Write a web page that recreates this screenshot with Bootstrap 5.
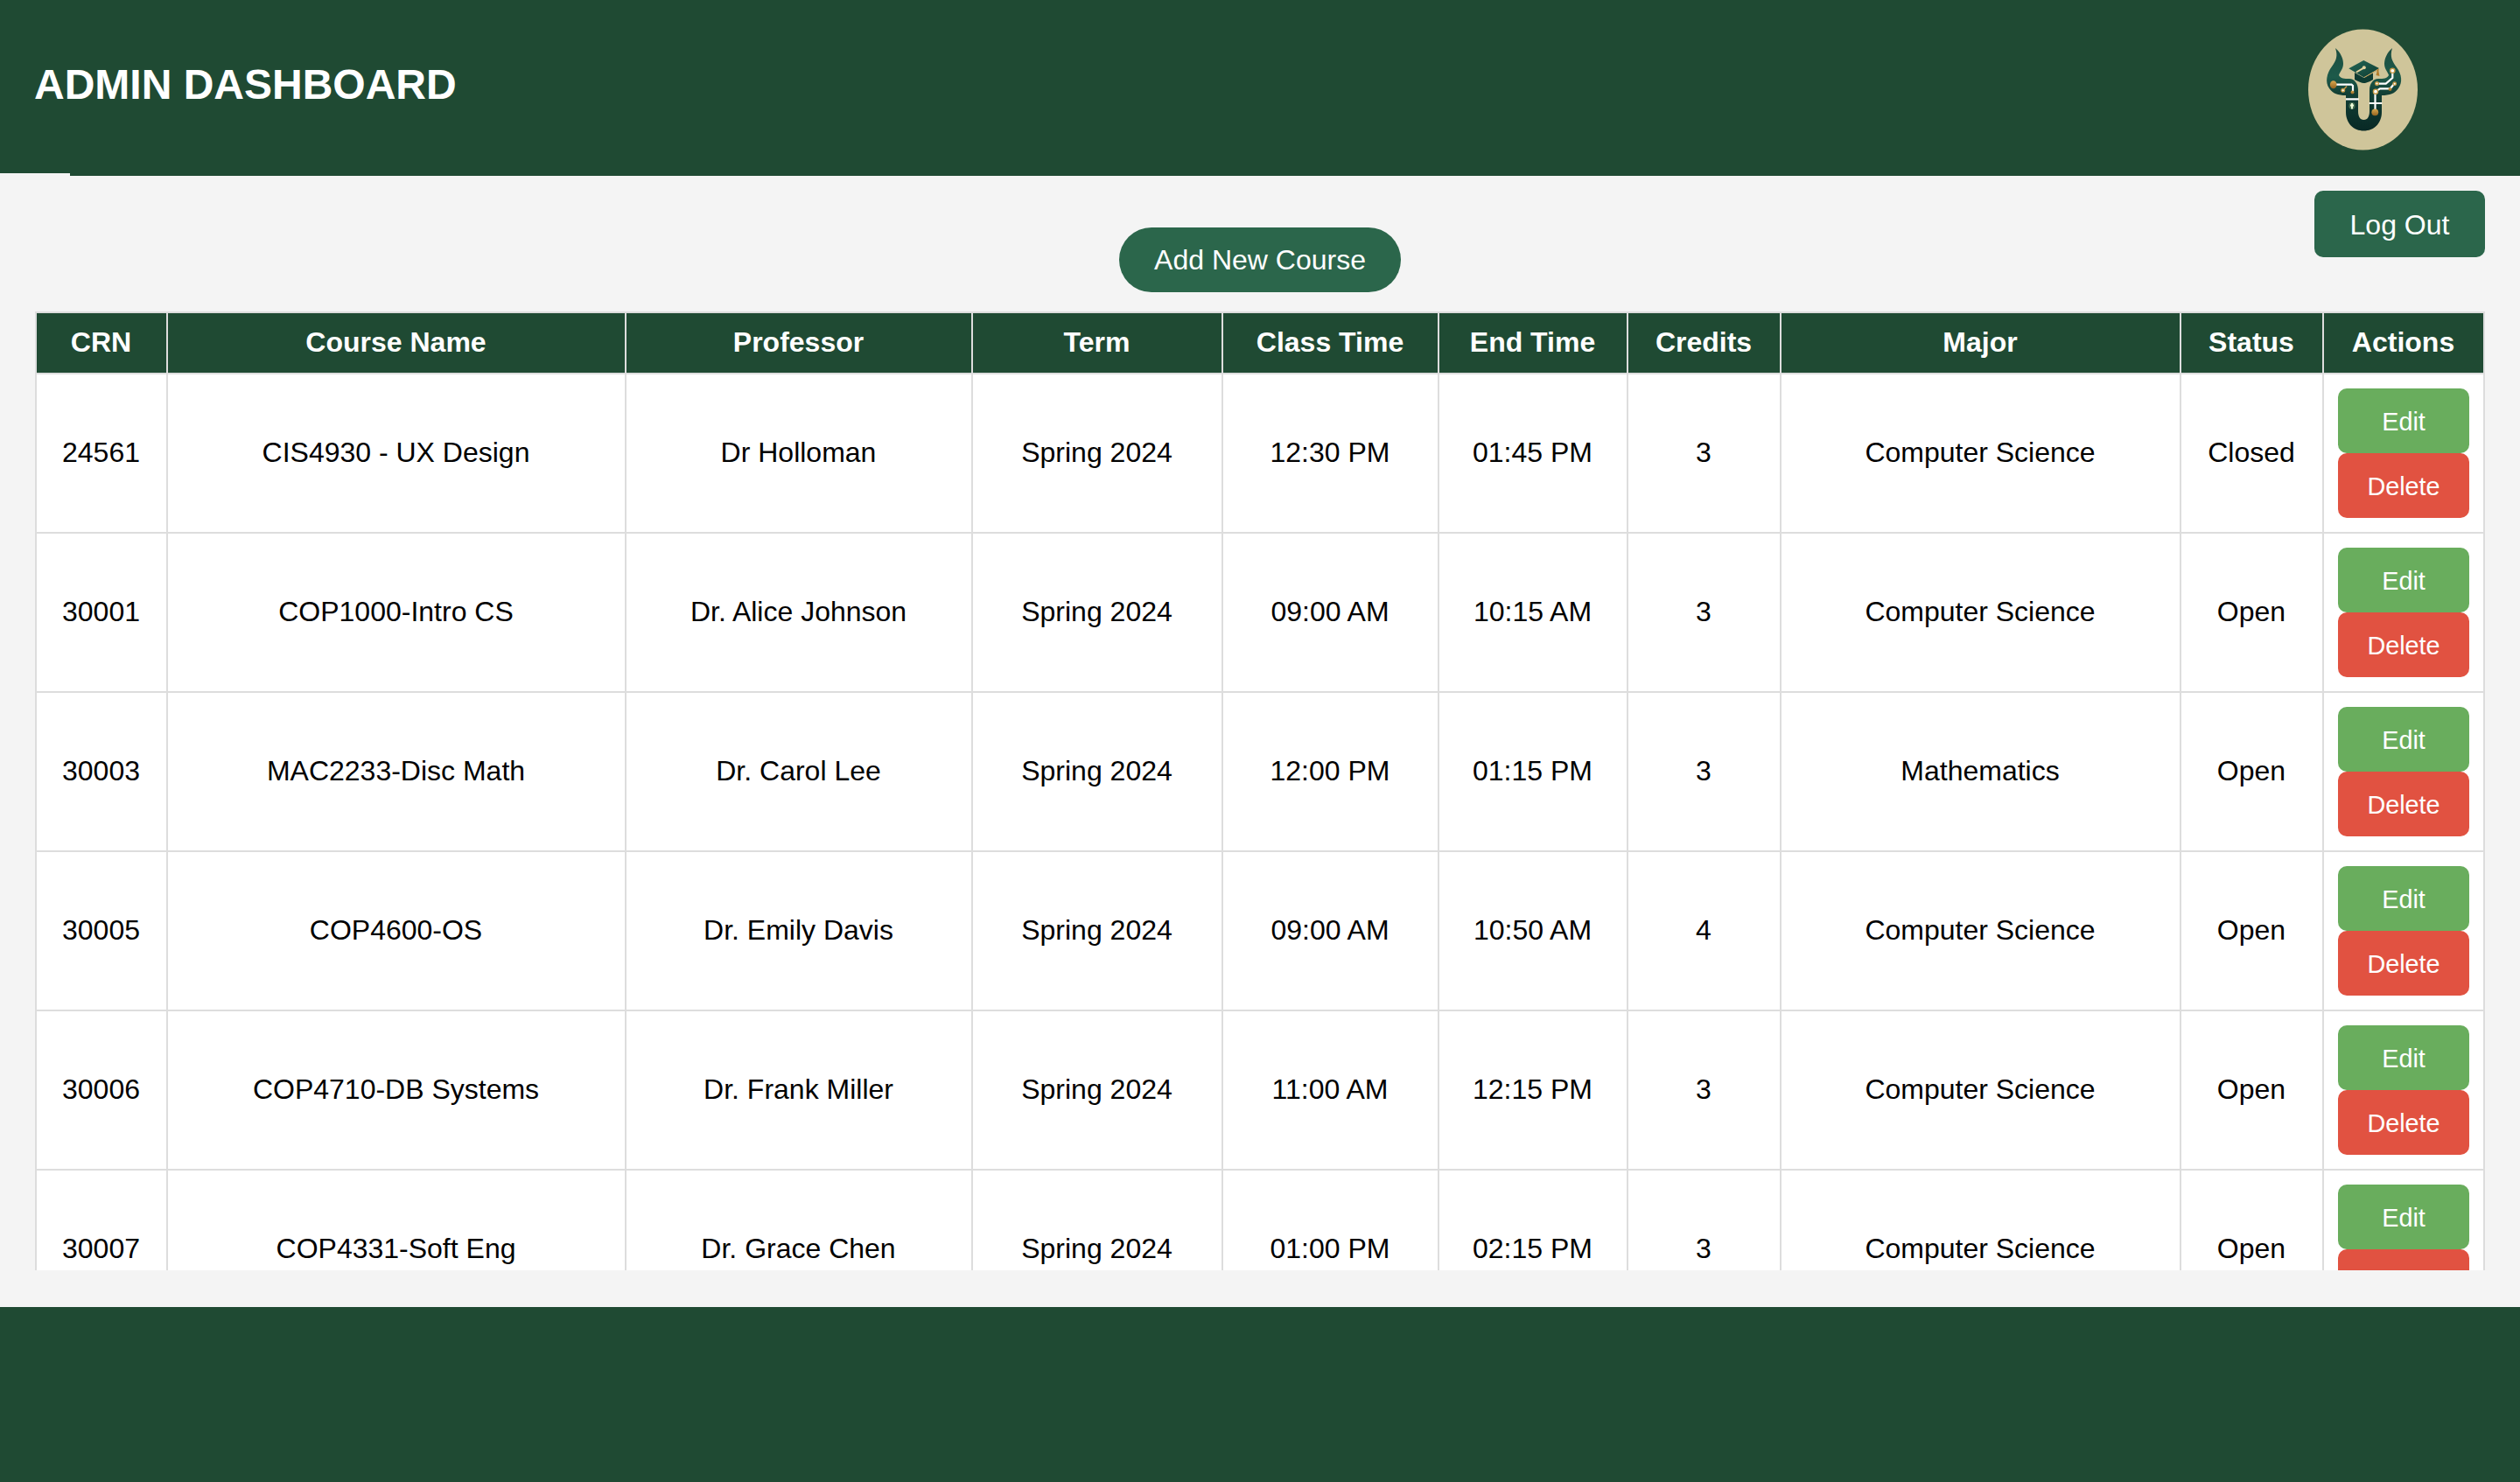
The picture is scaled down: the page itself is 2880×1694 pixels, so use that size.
<!DOCTYPE html>
<html lang="en">
<head>
<meta charset="utf-8">
<title>Admin Dashboard</title>
<link href="https://cdn.jsdelivr.net/npm/bootstrap@5.3.0/dist/css/bootstrap.min.css" rel="stylesheet">
<style>
  html, body { height: 100%; }
  body { font-family: "Liberation Sans", Arial, sans-serif; font-size: 32px; line-height: 36px; color: #000; background: #f4f4f4; }
  .top-bar { height: 201px; padding: 0 117px 0 40px; background: #1f4a33; }
  .top-bar h1 { font-size: 48px; line-height: 56px; margin-top: 69px; margin-left: -1px; }
  .crest { width: 126px; height: 140px; margin-top: 33px; }
  .notch { width: 80px; height: 3px; margin-top: -3px; background: #f4f4f4; }
  .workspace { height: 1293px; padding: 0 40px; }
  .btn { --bs-btn-font-size: 32px; --bs-btn-line-height: 36px; --bs-btn-border-width: 0; --bs-btn-border-radius: 10px; --bs-btn-color: #fff; --bs-btn-hover-color: #fff; --bs-btn-padding-x: 0; --bs-btn-padding-y: 0; }
  .btn-pine { --bs-btn-bg: #2b664b; --bs-btn-hover-bg: #1f4a33; }
  .btn-logout { width: 195px; height: 76px; margin-top: 17px; padding-top: 2px; }
  .btn-add { width: 322px; height: 74px; margin-top: -34px; --bs-btn-border-radius: 40px; }
  .btn-row { --bs-btn-font-size: 28.8px; width: 150px; height: 74px; padding-top: 2px; }
  .btn-edit { --bs-btn-bg: #69ad5d; --bs-btn-hover-bg: #579a4c; }
  .btn-del { --bs-btn-bg: #e15241; --bs-btn-hover-bg: #c64434; }
  .course-pane { height: 1096px; margin-top: 22px; }
  .course-grid { width: 2800px; table-layout: fixed; border-collapse: collapse; --bs-table-bg: #fff; --bs-table-color: #000; }
  .course-grid > :not(caption) > * > * { border: 2px solid #ddd; padding: 0 1px 2px 0; height: 182px; color: #000; background: #fff; box-shadow: none; }
  .course-grid > thead > tr > th { height: 70px; color: #fff; background: #1f4a33; vertical-align: middle; }
  .course-grid > tbody > tr > td.actions { padding: 0; }
  .foot-bar { height: 200px; background: #1f4a33; }
</style>
</head>
<body class="overflow-hidden">
<header class="top-bar d-flex justify-content-between align-items-start">
  <h1 class="fw-bold text-white mb-0">ADMIN DASHBOARD</h1>
  <svg class="crest" viewBox="0 0 126 140" role="img" aria-label="Bull crest">
    <defs>
      <linearGradient id="hide" x1="0" y1="0" x2="0" y2="1"><stop offset="0" stop-color="#1c4d40"/><stop offset=".35" stop-color="#1d5a4a"/><stop offset=".55" stop-color="#123f35"/><stop offset="1" stop-color="#082925"/></linearGradient>
      <linearGradient id="gold" x1="0" y1="0" x2="0" y2="1"><stop offset="0" stop-color="#d9a950"/><stop offset="1" stop-color="#94631f"/></linearGradient>
      <linearGradient id="felt" x1="0" y1="0" x2="1" y2="1"><stop offset="0" stop-color="#246655"/><stop offset="1" stop-color="#0f3d33"/></linearGradient>
    </defs>
    <ellipse cx="63.500" cy="69.500" rx="62.500" ry="69" fill="#cfc59a"/>
    <path fill="url(#hide)" d="M32 22C38 27 41 34 41 40C41 46 37 49 36 53C38 57 42 57 48 57C54 57 58 63 58 70V94C58 100 60 104 64.500 104C69 104 71 100 71 94V70C71 63 75 57 81 57C87 57 91 57 93 53C92 49 88 46 88 40C88 34 91 27 97 22C94 32 97 37 102 44C108 52 109 61 104 68C100 74 94 76 85 76V95C85 108 76 116.500 64.500 116.500C53 116.500 44 108 44 95V76C35 76 29 74 25 68C20 61 22 51 28 43C33 36 35 31 32 22Z"/>
    <path d="M54 50V58C58 60 62 62 64.700 62C67 62 72 60 75 58V50L64.700 56Z" fill="#0e3b32"/>
    <path d="M64.300 36L82 45L64.700 55.500L47.300 45.300Z" fill="url(#felt)"/>
    <path d="M65 55.500L82 46" fill="none" stroke="#c9a35a" stroke-width="1"/>
    <path d="M56 49.500L64 44.800" stroke="#e5d3a0" stroke-width="2"/>
    <circle cx="64.800" cy="44.300" r="2" fill="#e5d3a0"/>
    <path d="M79.500 46.500V49L78.500 53L82.500 54L81.500 49V46Z" fill="#b27c2c"/>
    <path d="M32 63.700H50.500L52 65V71M44 80.300H58.700M70.700 85H85.300M77.500 72V93M78 71.700L83 68.300H94.700L99 63M80 62.700H89.700L97.300 56V49" fill="none" stroke="#fff" stroke-width="2.200"/>
    <path d="M41 70L45 65.500" stroke="#c69645" stroke-width="1.500"/>
    <g fill="url(#gold)"><ellipse cx="29.700" cy="63.700" rx="3.800" ry="4.500"/><circle cx="77.300" cy="95.300" r="3.900"/><circle cx="51.500" cy="72.500" r="2"/><circle cx="94.500" cy="69" r="2"/></g>
    <g fill="#fff" stroke="#c99b48" stroke-width="1.400"><circle cx="40.700" cy="70.300" r="1.800"/><circle cx="97.300" cy="47.800" r="2.600"/><circle cx="79.500" cy="62.500" r="1.800"/><circle cx="78" cy="71.700" r="2.600"/><circle cx="99.700" cy="62.700" r="1.700"/></g>
    <ellipse cx="51" cy="88" rx="3.600" ry="4" fill="#6d9268" opacity=".6"/>
    <path d="M51 85V91.500M49 87.500H53" stroke="#f1ffdc" stroke-width="1.900"/>
  </svg>
</header>
<div class="notch position-relative"></div>
<main class="workspace">
  <div class="d-flex justify-content-end"><button class="btn btn-pine btn-logout">Log Out</button></div>
  <div class="d-flex justify-content-center"><button class="btn btn-pine btn-add">Add New Course</button></div>
  <div class="course-pane overflow-hidden">
    <table class="table course-grid text-center align-middle mb-0">
      <colgroup id="cols"></colgroup>
      <thead><tr><th>CRN</th><th>Course Name</th><th>Professor</th><th>Term</th><th>Class Time</th><th>End Time</th><th>Credits</th><th>Major</th><th>Status</th><th>Actions</th></tr></thead>
      <tbody id="courses"></tbody>
    </table>
  </div>
</main>
<footer class="foot-bar"></footer>
<script src="https://cdn.jsdelivr.net/npm/bootstrap@5.3.0/dist/js/bootstrap.bundle.min.js"></script>
<script>
  const widths = [150, 524, 396, 286, 247, 216, 175, 457, 163, 184];
  document.getElementById('cols').innerHTML = widths.map(w => `<col style="width:${w}px">`).join('');
  const courses = [
    ['24561', 'CIS4930 - UX Design', 'Dr Holloman', 'Spring 2024', '12:30 PM', '01:45 PM', 3, 'Computer Science', 'Closed'],
    ['30001', 'COP1000-Intro CS', 'Dr. Alice Johnson', 'Spring 2024', '09:00 AM', '10:15 AM', 3, 'Computer Science', 'Open'],
    ['30003', 'MAC2233-Disc Math', 'Dr. Carol Lee', 'Spring 2024', '12:00 PM', '01:15 PM', 3, 'Mathematics', 'Open'],
    ['30005', 'COP4600-OS', 'Dr. Emily Davis', 'Spring 2024', '09:00 AM', '10:50 AM', 4, 'Computer Science', 'Open'],
    ['30006', 'COP4710-DB Systems', 'Dr. Frank Miller', 'Spring 2024', '11:00 AM', '12:15 PM', 3, 'Computer Science', 'Open'],
    ['30007', 'COP4331-Soft Eng', 'Dr. Grace Chen', 'Spring 2024', '01:00 PM', '02:15 PM', 3, 'Computer Science', 'Open']
  ];
  document.getElementById('courses').innerHTML = courses.map(c =>
    `<tr>${c.map(v => `<td>${v}</td>`).join('')}<td class="actions"><div class="d-flex flex-column align-items-center"><button class="btn btn-row btn-edit">Edit</button><button class="btn btn-row btn-del">Delete</button></div></td></tr>`).join('');
</script>
</body>
</html>
